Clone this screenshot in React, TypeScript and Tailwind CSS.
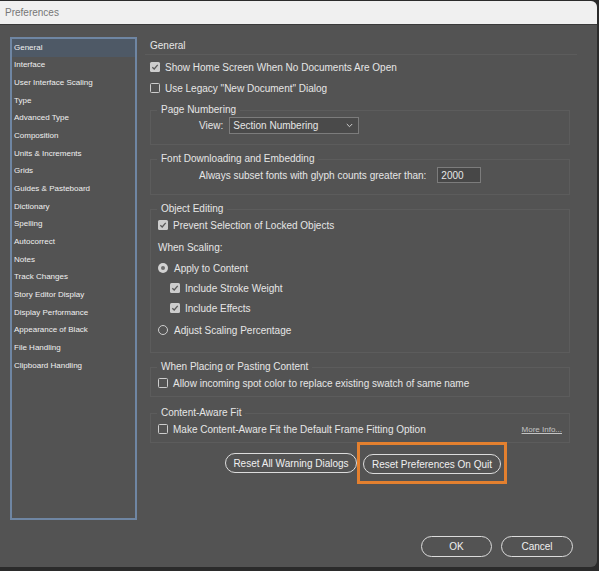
import React from 'react';

const sections = [
  'General',
  'Interface',
  'User Interface Scaling',
  'Type',
  'Advanced Type',
  'Composition',
  'Units & Increments',
  'Grids',
  'Guides & Pasteboard',
  'Dictionary',
  'Spelling',
  'Autocorrect',
  'Notes',
  'Track Changes',
  'Story Editor Display',
  'Display Performance',
  'Appearance of Black',
  'File Handling',
  'Clipboard Handling',
];

const Check = ({ checked }: { checked?: boolean }) =>
  checked ? (
    <span className="flex h-[10px] w-[10px] shrink-0 items-center justify-center rounded-[1.5px] bg-[#cdcdcd]">
      <svg width="8" height="8" viewBox="0 0 8 8">
        <path d="M1.3 4.2 L3.2 6 L6.7 1.8" fill="none" stroke="#5a5a5a" strokeWidth="1.3" />
      </svg>
    </span>
  ) : (
    <span className="h-[10px] w-[10px] shrink-0 rounded-[1.5px] border border-[#cdcdcd]" />
  );

const Radio = ({ checked }: { checked?: boolean }) =>
  checked ? (
    <span className="flex h-[10px] w-[10px] shrink-0 items-center justify-center rounded-full bg-[#d2d2d2]">
      <span className="h-[4px] w-[4px] rounded-full bg-[#6c6c6c]" />
    </span>
  ) : (
    <span className="h-[10px] w-[10px] shrink-0 rounded-full border border-[#cdcdcd]" />
  );

const Row = ({ children, className = '' }: { children: React.ReactNode; className?: string }) => (
  <div className={`flex h-[18px] items-center ${className}`}>{children}</div>
);

const Group = ({
  title,
  children,
  className = '',
}: {
  title: string;
  children: React.ReactNode;
  className?: string;
}) => (
  <fieldset className={`ml-[5px] w-[420px] border border-[#5c5c5c] ${className}`}>
    <legend className="ml-[6px] px-[4px] leading-[14px]">{title}</legend>
    {children}
  </fieldset>
);

const Pill = ({ children, className = '' }: { children: React.ReactNode; className?: string }) => (
  <button
    className={`flex items-center justify-center rounded-full border-[1.5px] border-[#dcdcdc] text-[10px] text-[#f0f0f0] ${className}`}
  >
    {children}
  </button>
);

export default function App() {
  return (
    <div
      className="h-[571px] w-[599px] bg-[#2b2b2b] pt-[1px] text-[10px] text-[#e6e6e6]"
      style={{ fontFamily: '"Liberation Sans", Arial, sans-serif' }}
    >
      <div className="flex h-[566px] w-[597px] flex-col overflow-hidden rounded-tr-[6px] rounded-br-[6px] bg-[#535353]">
        <div className="flex h-[24px] shrink-0 items-center border-b border-[#3a3a3a] bg-[#f0f0f0] pl-[5px] text-[10px] text-[#767676]">
          Preferences
        </div>

        <div className="flex pt-[12px] pl-[10px]">
          <div className="h-[483px] w-[127px] border-2 border-[#6f86a3]">
            {sections.map((s, i) => (
              <div
                key={s}
                className={`flex h-[17.67px] items-center pl-[2px] text-[8px] text-[#f0f0f0] ${
                  i === 0 ? 'bg-[#4e5966]' : ''
                }`}
              >
                {s}
              </div>
            ))}
          </div>

          <div className="ml-[8px] flex w-[432px] flex-col">
            <div className="h-[18px] border-b border-[#5c5c5c] pt-[2px] pl-[5px] leading-[14px]">General</div>

            <Row className="mt-[3px] gap-[5px] pl-[5px]">
              <Check checked />
              <span>Show Home Screen When No Documents Are Open</span>
            </Row>
            <Row className="mt-[3px] gap-[5px] pl-[5px]">
              <Check />
              <span>Use Legacy "New Document" Dialog</span>
            </Row>

            <Group title="Page Numbering" className="mt-[6px] pb-[10px]">
              <div className="flex h-[17px] items-center pl-[48px]">
                <span>View:</span>
                <div className="ml-[6px] flex h-[17px] w-[130px] items-center justify-between border border-[#7c7c7c] bg-[#4a4a4a] pr-[5px] pl-[3px]">
                  <span>Section Numbering</span>
                  <svg width="7" height="5" viewBox="0 0 7 5">
                    <path d="M0.8 1 L3.5 3.7 L6.2 1" fill="none" stroke="#d0d0d0" strokeWidth="1" />
                  </svg>
                </div>
              </div>
            </Group>

            <Group title="Font Downloading and Embedding" className="mt-[7px] pb-[10px]">
              <Row className="pl-[48px]">
                <span>Always subset fonts with glyph counts greater than:</span>
                <div className="ml-[11px] flex h-[16px] w-[44px] items-center border border-[#7c7c7c] bg-[#474747] pl-[3px]">
                  2000
                </div>
              </Row>
            </Group>

            <Group title="Object Editing" className="mt-[7px] pb-[13px]">
              <div className="pl-[7px]">
                <Row className="gap-[5px]">
                  <Check checked />
                  <span>Prevent Selection of Locked Objects</span>
                </Row>
                <Row className="mt-[4px]">When Scaling:</Row>
                <Row className="mt-[3px] gap-[6px]">
                  <Radio checked />
                  <span>Apply to Content</span>
                </Row>
                <Row className="mt-[2px] gap-[5px] pl-[12px]">
                  <Check checked />
                  <span>Include Stroke Weight</span>
                </Row>
                <Row className="mt-[2px] gap-[5px] pl-[12px]">
                  <Check checked />
                  <span>Include Effects</span>
                </Row>
                <Row className="mt-[4px] gap-[6px]">
                  <Radio />
                  <span>Adjust Scaling Percentage</span>
                </Row>
              </div>
            </Group>

            <Group title="When Placing or Pasting Content" className="mt-[7px] pb-[4px]">
              <Row className="gap-[5px] pl-[7px]">
                <Check />
                <span>Allow incoming spot color to replace existing swatch of same name</span>
              </Row>
            </Group>

            <Group title="Content-Aware Fit" className="mt-[9px] pb-[4px]">
              <Row className="gap-[5px] pr-[7px] pl-[7px]">
                <Check />
                <span>Make Content-Aware Fit the Default Frame Fitting Option</span>
                <span className="ml-auto pt-[2px] text-[8px] text-[#c4c4c4] underline">More Info...</span>
              </Row>
            </Group>

            <div className="-mt-[1px] flex items-center pl-[80px]">
              <Pill className="h-[20px] w-[132px]">Reset All Warning Dialogs</Pill>
              <div className="border-[3px] border-[#e3802f] px-[3px] pt-[9px] pb-[7px]">
                <Pill className="h-[20px] w-[138px]">Reset Preferences On Quit</Pill>
              </div>
            </div>
          </div>
        </div>

        <div className="flex flex-1 items-end justify-end gap-[9px] pr-[24px] pb-[10px]">
          <Pill className="h-[21px] w-[71px]">OK</Pill>
          <Pill className="h-[21px] w-[72px]">Cancel</Pill>
        </div>
      </div>
    </div>
  );
}
